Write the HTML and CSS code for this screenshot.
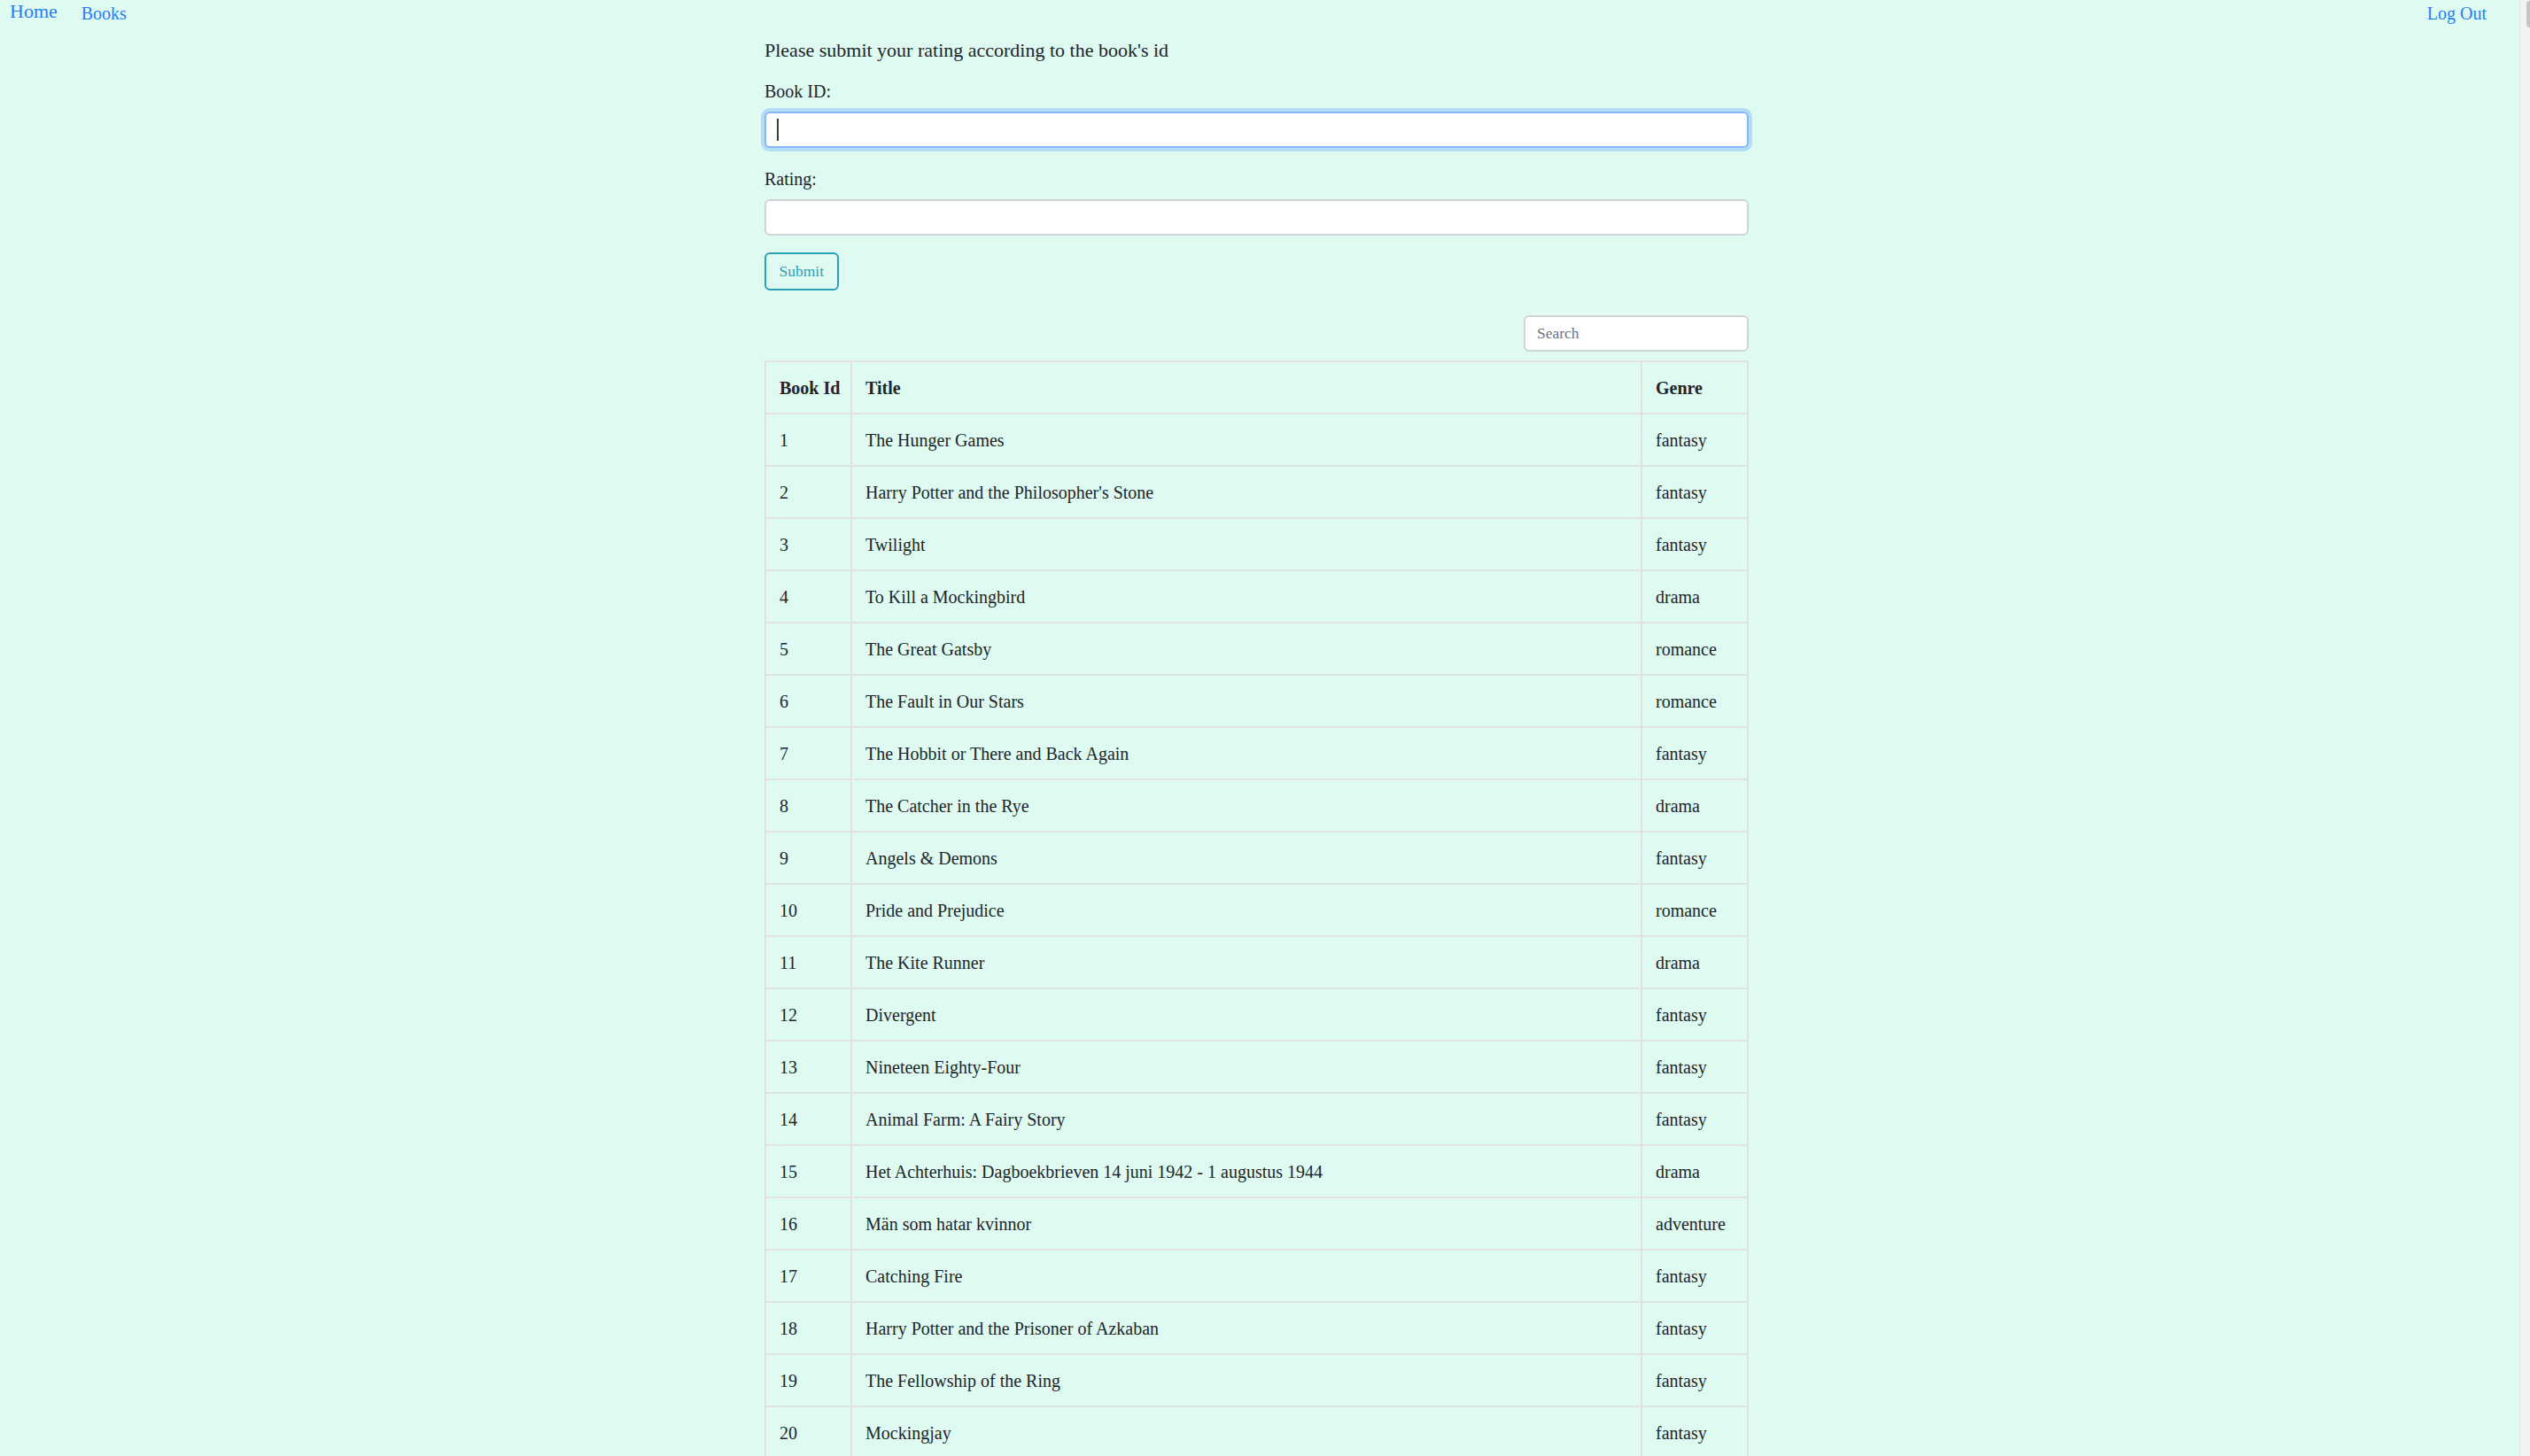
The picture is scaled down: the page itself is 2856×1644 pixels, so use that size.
FILE: index.html
```html
<!DOCTYPE html>
<html lang="en">
<head>
<meta charset="utf-8">
<title>Books</title>
<link rel="stylesheet" href="styles.css">
</head>
<body>
<div class="screen">
  <div class="page">
    <nav class="topnav">
      <div class="nav-left">
        <a class="nav-brand" href="#">Home</a>
        <a class="nav-link" href="#">Books</a>
      </div>
      <a class="nav-link" href="#">Log Out</a>
    </nav>
    <main class="container">
      <p class="intro">Please submit your rating according to the book's id</p>
      <form class="rating-form">
        <div class="form-group">
          <label class="form-label" for="bookid">Book ID:</label>
          <div class="field">
            <input class="form-control is-focused" id="bookid" type="text">
            <span class="caret"></span>
          </div>
        </div>
        <div class="form-group form-group-last">
          <label class="form-label" for="rating">Rating:</label>
          <input class="form-control" id="rating" type="text">
        </div>
        <button class="btn-outline" type="button">Submit</button>
      </form>
      <div class="search-row">
        <input class="search-input" type="text" placeholder="Search">
      </div>
      <table class="book-table">
        <colgroup>
          <col class="col-id">
          <col class="col-title">
          <col class="col-genre">
        </colgroup>
        <thead>
          <tr><th>Book Id</th><th>Title</th><th>Genre</th></tr>
        </thead>
        <tbody>
          <tr><td>1</td><td>The Hunger Games</td><td>fantasy</td></tr>
          <tr><td>2</td><td>Harry Potter and the Philosopher's Stone</td><td>fantasy</td></tr>
          <tr><td>3</td><td>Twilight</td><td>fantasy</td></tr>
          <tr><td>4</td><td>To Kill a Mockingbird</td><td>drama</td></tr>
          <tr><td>5</td><td>The Great Gatsby</td><td>romance</td></tr>
          <tr><td>6</td><td>The Fault in Our Stars</td><td>romance</td></tr>
          <tr><td>7</td><td>The Hobbit or There and Back Again</td><td>fantasy</td></tr>
          <tr><td>8</td><td>The Catcher in the Rye</td><td>drama</td></tr>
          <tr><td>9</td><td>Angels &amp; Demons</td><td>fantasy</td></tr>
          <tr><td>10</td><td>Pride and Prejudice</td><td>romance</td></tr>
          <tr><td>11</td><td>The Kite Runner</td><td>drama</td></tr>
          <tr><td>12</td><td>Divergent</td><td>fantasy</td></tr>
          <tr><td>13</td><td>Nineteen Eighty-Four</td><td>fantasy</td></tr>
          <tr><td>14</td><td>Animal Farm: A Fairy Story</td><td>fantasy</td></tr>
          <tr><td>15</td><td>Het Achterhuis: Dagboekbrieven 14 juni 1942 - 1 augustus 1944</td><td>drama</td></tr>
          <tr><td>16</td><td>Män som hatar kvinnor</td><td>adventure</td></tr>
          <tr><td>17</td><td>Catching Fire</td><td>fantasy</td></tr>
          <tr><td>18</td><td>Harry Potter and the Prisoner of Azkaban</td><td>fantasy</td></tr>
          <tr><td>19</td><td>The Fellowship of the Ring</td><td>fantasy</td></tr>
          <tr><td>20</td><td>Mockingjay</td><td>fantasy</td></tr>
        </tbody>
      </table>
    </main>
  </div>
  <div class="scrollbar"><div class="scroll-thumb"></div></div>
</div>
</body>
</html>
```

FILE: styles.css
```css
html, body {
  margin: 0;
  padding: 0;
  height: 1644px;
  overflow: hidden;
}
body {
  background: #dffaf1;
  color: #212529;
  font-family: "Liberation Serif", "Times New Roman", serif;
  font-size: 20px;
  line-height: 30px;
}
.screen {
  display: flex;
  height: 1644px;
}
.page {
  flex: 1;
  min-width: 0;
  padding-right: 7px;
  overflow: hidden;
}
.scrollbar {
  width: 11px;
  background: #f2f2f2;
  border-left: 1px solid #e2e2e2;
}
.scroll-thumb {
  margin: 1px 0 0 7px;
  width: 4px;
  height: 30px;
  background: #c4c4c4;
  border-radius: 4px 0 0 4px;
}
.topnav {
  display: flex;
  justify-content: space-between;
  align-items: flex-start;
  padding: 0 30px 0 11px;
  height: 30px;
}
.nav-left {
  display: flex;
  align-items: flex-start;
  gap: 27px;
}
.topnav a {
  color: #1f7ef3;
  text-decoration: none;
}
.nav-brand {
  font-size: 22px;
  line-height: 26px;
}
.nav-link {
  font-size: 20px;
  line-height: 30px;
}
.container {
  width: 1111px;
  margin: 0 auto;
  padding-top: 12px;
}
.intro {
  margin: 0 0 16px;
  font-size: 22px;
}
.form-group {
  margin-bottom: 20px;
}
.form-group-last {
  margin-bottom: 19px;
}
.form-label {
  display: block;
  margin-bottom: 8px;
}
.field {
  position: relative;
}
.form-control {
  display: block;
  box-sizing: border-box;
  width: 100%;
  height: 41px;
  margin: 0;
  padding: 0 13px;
  background: #fff;
  border: 2px solid #ced4da;
  border-radius: 6px;
  font-family: inherit;
  font-size: 20px;
  color: #495057;
  outline: none;
}
.form-control.is-focused {
  border-color: #86b7f7;
  box-shadow: 0 0 0 4px #b4dcf4;
}
.caret {
  position: absolute;
  left: 14px;
  top: 8px;
  width: 2px;
  height: 25px;
  background: #3a3a3a;
}
.btn-outline {
  display: block;
  box-sizing: border-box;
  height: 43px;
  margin: 0;
  padding: 0 14.5px;
  background: transparent;
  border: 2px solid #2ba1b7;
  border-radius: 6px;
  color: #2ba1b7;
  font-family: inherit;
  font-size: 17.5px;
  line-height: 39px;
}
.search-row {
  display: flex;
  justify-content: flex-end;
  margin-top: 28px;
  margin-bottom: 10px;
}
.search-input {
  box-sizing: border-box;
  width: 254px;
  height: 41px;
  margin: 0;
  padding: 0 13px;
  background: #fff;
  border: 2px solid #ced4da;
  border-radius: 6px;
  font-family: inherit;
  font-size: 17.5px;
  color: #495057;
  outline: none;
}
.search-input::placeholder {
  color: #6c757d;
}
.book-table {
  width: 100%;
  table-layout: fixed;
  border-collapse: collapse;
}
.col-id {
  width: 97px;
}
.col-genre {
  width: 120px;
}
.book-table th,
.book-table td {
  border: 2px solid #dfe2e4;
  padding: 14px 15px 13px;
  text-align: left;
  vertical-align: top;
  line-height: 30px;
  white-space: nowrap;
}
.book-table th {
  font-weight: bold;
}
```
